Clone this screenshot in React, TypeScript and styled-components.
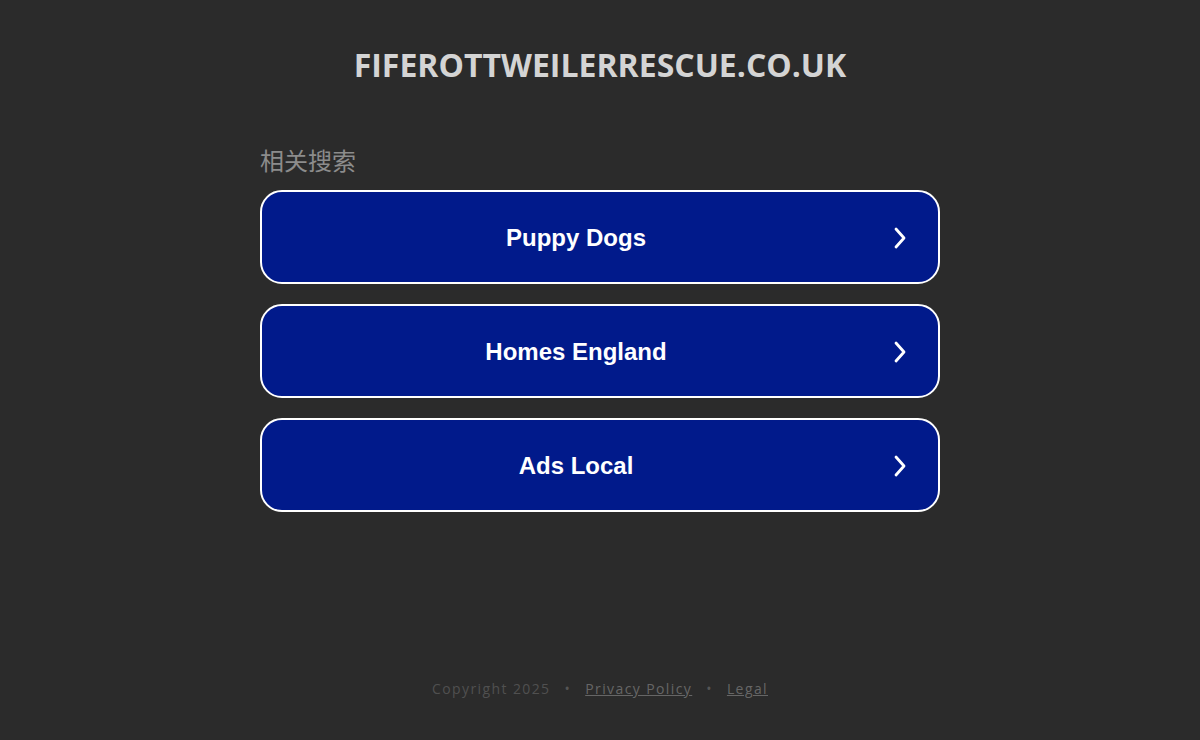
import React from "react";
import styled, { createGlobalStyle } from "styled-components";

const GlobalStyle = createGlobalStyle`
  html, body {
    margin: 0;
    padding: 0;
    background: #2b2b2b;
    height: 100%;
  }
  #root {
    min-height: 100%;
  }
`;

const Page = styled.div`
  min-height: 740px;
  display: flex;
  flex-direction: column;
  align-items: center;
  background: #2b2b2b;
`;

const Title = styled.h1`
  margin: 45px 0 0;
  font-family: "Open Sans", "Noto Sans", sans-serif;
  font-weight: 700;
  font-size: 32px;
  line-height: 40px;
  color: #d4d4d4;
`;

const Related = styled.section`
  width: 680px;
  margin-top: 59px;
  display: flex;
  flex-direction: column;
`;

const RelatedHeading = styled.h2`
  margin: 0 0 14px;
  font-family: "Noto Sans CJK SC", "Noto Sans", sans-serif;
  font-weight: 400;
  font-size: 24px;
  line-height: 32px;
  color: #8c8c8c;
`;

const LinkList = styled.div`
  display: flex;
  flex-direction: column;
  gap: 20px;
`;

const LinkButton = styled.a`
  display: flex;
  align-items: center;
  height: 94px;
  box-sizing: border-box;
  border: 2px solid #ffffff;
  border-radius: 22px;
  background: #011a8b;
  color: #ffffff;
  text-decoration: none;
  padding: 2px 28px 0 0;
  cursor: pointer;
`;

const LinkLabel = styled.span`
  flex: 1;
  text-align: center;
  font-family: "Liberation Sans", Arial, sans-serif;
  font-weight: 700;
  font-size: 24px;
`;

const Chevron = () => (
  <svg width="20" height="24" viewBox="0 0 20 24" fill="none">
    <path
      d="M6 3 L14 12 L6 21"
      stroke="#ffffff"
      strokeWidth="2.8"
      strokeLinecap="round"
      strokeLinejoin="round"
    />
  </svg>
);

const Footer = styled.footer`
  margin-top: auto;
  margin-bottom: 42px;
  display: flex;
  align-items: center;
  gap: 14px;
  font-family: "Open Sans", "Noto Sans", sans-serif;
  font-size: 14px;
  letter-spacing: 1.4px;
  color: #505050;
`;

const FooterLink = styled.a`
  color: #666666;
  text-decoration: underline;
`;

const Dot = styled.span`
  color: #555555;
`;

const links = ["Puppy Dogs", "Homes England", "Ads Local"];

export default function App() {
  return (
    <Page>
      <GlobalStyle />
      <Title>FIFEROTTWEILERRESCUE.CO.UK</Title>
      <Related>
        <RelatedHeading>相关搜索</RelatedHeading>
        <LinkList>
          {links.map((l) => (
            <LinkButton key={l}>
              <LinkLabel>{l}</LinkLabel>
              <Chevron />
            </LinkButton>
          ))}
        </LinkList>
      </Related>
      <Footer>
        <span>Copyright 2025</span>
        <Dot>•</Dot>
        <FooterLink>Privacy Policy</FooterLink>
        <Dot>•</Dot>
        <FooterLink>Legal</FooterLink>
      </Footer>
    </Page>
  );
}
